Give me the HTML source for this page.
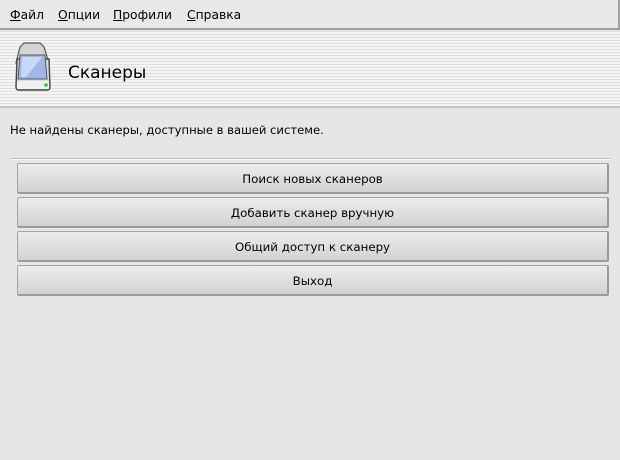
<!DOCTYPE html>
<html><head><meta charset="utf-8"><style>
body{margin:0;width:620px;height:460px;background:#e6e6e6;font-family:"DejaVu Sans","Liberation Sans",sans-serif;position:relative;overflow:hidden}
.menu{position:absolute;left:0;top:0;width:618px;height:28px;background:#e8e8e8;border-right:2px solid #a0a0a0;border-bottom:2px solid #a0a0a0;font-size:12.3px}
.menu span{position:absolute;top:8px}
.hdr{position:absolute;left:0;top:31px;width:620px;height:75px;background:repeating-linear-gradient(#e0e0e0 0 1px,#f4f4f4 1px 3px);border-bottom:2px solid #c4c4c4}
.title{position:absolute;left:68px;top:63px;font-size:17px;color:#000}
.msg{position:absolute;left:10px;top:123px;font-size:11.6px}
.sep{position:absolute;left:10px;top:158px;width:600px;height:1px;background:#bdbdbd;border-bottom:1px solid #fafafa}
.btn{position:absolute;left:17px;width:589px;height:28px;border:1px solid #a4a4a4;border-right:2px solid #9a9a9a;border-bottom:2px solid #9a9a9a;border-radius:2px;background:linear-gradient(#ececec,#d2d2d2);font-size:11.8px;text-align:center;line-height:31px;box-sizing:content-box}
</style></head><body>
<div class="menu"><span style="left:10px"><u>Ф</u>айл</span><span style="left:58px"><u>О</u>пции</span><span style="left:113px"><u>П</u>рофили</span><span style="left:187px"><u>С</u>правка</span></div>
<div class="hdr"></div>
<svg style="position:absolute;left:14px;top:41px" width="38" height="50" viewBox="0 0 38 50">
<path d="M6 6 L10 2 L26 2 L30 6 L35 22 L2 22 Z" fill="#d4d4d4" stroke="#555" stroke-width="1.2"/>
<path d="M3 18 L35 18 L36 46 Q36 49 33 49 L5 49 Q2 49 2 46 Z" fill="#dcdcdc" stroke="#444" stroke-width="1.4"/>
<path d="M6 14 L31 14 L33 38 L4 38 Z" fill="#9fb6e6" stroke="#556" stroke-width="1"/>
<path d="M8 16 L28 16 L12 36 L7 36 Z" fill="#c8d8f6"/>
<rect x="3" y="40" width="32" height="8" fill="#f0f0f0"/>
<circle cx="32" cy="44" r="1.8" fill="#2c2"/>
</svg>
<div class="title">Сканеры</div>
<div class="msg">Не найдены сканеры, доступные в вашей системе.</div>
<div class="sep"></div>
<div class="btn" style="top:163px">Поиск новых сканеров</div>
<div class="btn" style="top:197px">Добавить сканер вручную</div>
<div class="btn" style="top:231px">Общий доступ к сканеру</div>
<div class="btn" style="top:265px">Выход</div>
</body></html>
